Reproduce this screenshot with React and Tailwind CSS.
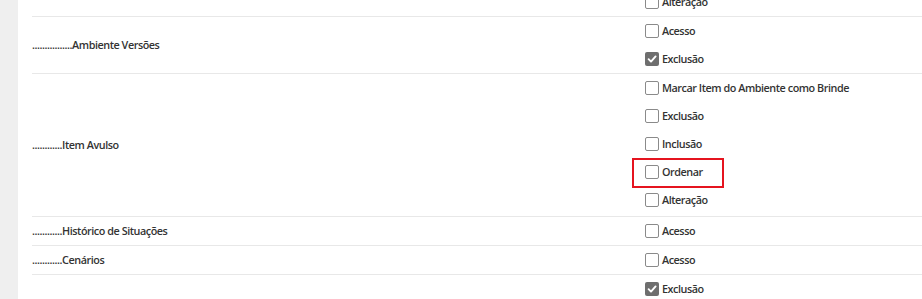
import React from 'react';

const rows = [
  { label: '', items: [{ text: 'Alteração' }] },
  { label: '................Ambiente Versões', items: [{ text: 'Acesso' }, { text: 'Exclusão', checked: true }] },
  {
    label: '............Item Avulso',
    items: [
      { text: 'Marcar Item do Ambiente como Brinde' },
      { text: 'Exclusão' },
      { text: 'Inclusão' },
      { text: 'Ordenar', highlight: true },
      { text: 'Alteração' },
    ],
    extra: true,
  },
  { label: '............Histórico de Situações', items: [{ text: 'Acesso' }] },
  { label: '............Cenários', items: [{ text: 'Acesso' }] },
  { label: '', items: [{ text: 'Exclusão', checked: true }] },
];

const Check = ({ checked }) =>
  checked ? (
    <span className="w-[14px] h-[14px] rounded-[2px] bg-[#6e6e6e] flex items-center justify-center shrink-0">
      <svg width="10" height="10" viewBox="0 0 10 10">
        <path d="M1.6 5.2 L4 7.6 L8.6 2.4" fill="none" stroke="#fff" strokeWidth="1.9" strokeLinecap="round" strokeLinejoin="round" />
      </svg>
    </span>
  ) : (
    <span className="w-[14px] h-[14px] rounded-[2px] border border-[#8a8a8a] bg-white shrink-0" />
  );

const Item = ({ text, checked, highlight }) => (
  <div className="relative h-[28px] flex items-center gap-[3px] pl-[1px]">
    <Check checked={checked} />
    <span>{text}</span>
    {/* destaque vermelho da captura */}
    {highlight && (
      <span className="absolute left-[-12px] top-0 w-[92px] h-[30px] border-2 border-[#e5141f] pointer-events-none" />
    )}
  </div>
);

export default function App() {
  return (
    <div
      className="w-[922px] h-[299px] overflow-hidden flex bg-white text-[10.8px] font-semibold tracking-[-0.45px] text-[#333]"
      style={{ fontFamily: '"Open Sans", "Noto Sans", sans-serif' }}
    >
      <div className="w-[18px] shrink-0 bg-[#efefef]" />
      <div className="flex-1 pl-[14px]">
        <div className="-mt-[12px]">
          {rows.map((row, idx) => (
            <div
              key={idx}
              className={`grid grid-cols-[612px_1fr] ${idx > 0 ? 'border-t border-[#e8e8e8]' : ''}`}
            >
              <div className="flex items-center">{row.label}</div>
              <div className={row.extra ? 'pb-[2px]' : ''}>
                {row.items.map((it, i) => (
                  <Item key={i} {...it} />
                ))}
              </div>
            </div>
          ))}
        </div>
      </div>
    </div>
  );
}
